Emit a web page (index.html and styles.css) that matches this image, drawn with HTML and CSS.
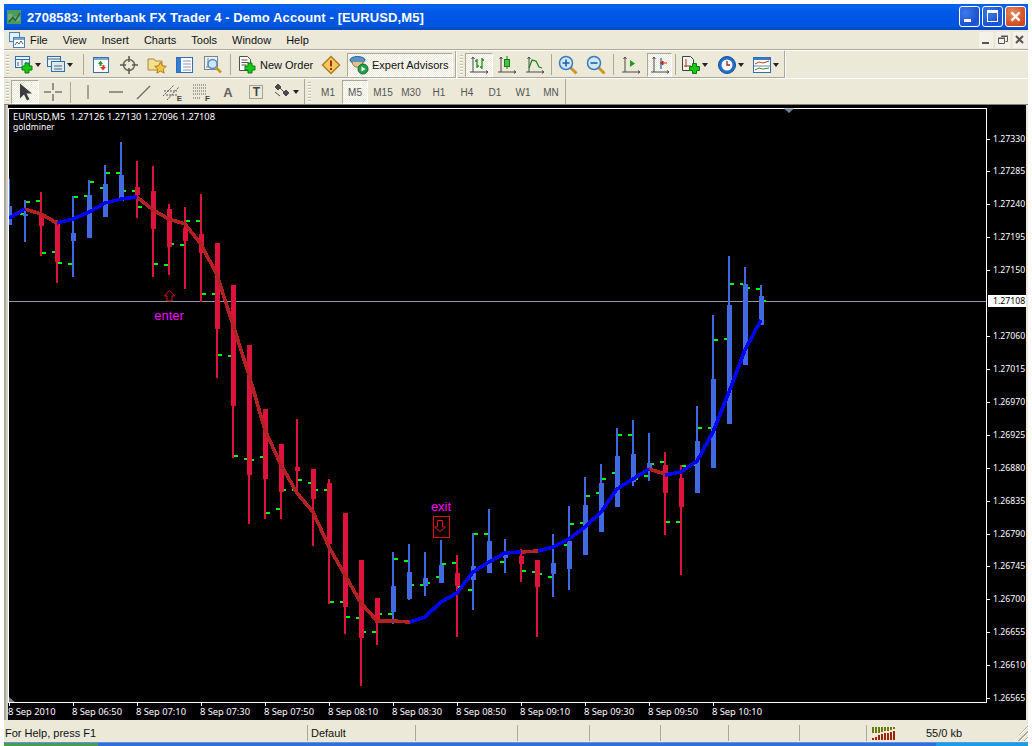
FILE: index.html
```html
<!DOCTYPE html>
<html lang="en">
<head>
<meta charset="utf-8">
<title>2708583: Interbank FX Trader 4 - Demo Account - [EURUSD,M5]</title>
<link rel="stylesheet" href="styles.css">
</head>
<body>
<svg class="defs" width="0" height="0">
  <defs>
    <g id="plus"><path d="M5 2h4v3h3v4H9v3H5V9H2V5h3z" fill="#18C818" stroke="#0A7A0A" stroke-width="1"/></g>
    <g id="axes" fill="none" stroke="#4A4A4A"><path d="M4 2v15M1 17h18M2.500 4L4 2l1.500 2M17 15.500l2 1.500-2 1.500"/></g>
    <symbol id="i-new" viewBox="0 0 20 20"><rect x="1.500" y="1.500" width="14" height="11" fill="#E8F2FC" stroke="#2F6DB5"/><path d="M1 4.500h15" stroke="#2F6DB5"/><path d="M4 7v4M8 5v5M12 7v4" stroke="#50606C"/><use href="#plus" x="6" y="6"/></symbol>
    <symbol id="i-prof" viewBox="0 0 20 20"><rect x="1.500" y="1.500" width="13" height="10" fill="#E8F2FC" stroke="#2F6DB5"/><rect x="5.500" y="6.500" width="13" height="10" fill="#DCEAF8" stroke="#2F6DB5"/><path d="M2 4h12M8 11h8M8 14h8" stroke="#50606C"/></symbol>
    <symbol id="i-mw" viewBox="0 0 20 20"><rect x="2.500" y="2.500" width="15" height="15" fill="#fff" stroke="#3A6EA5"/><path d="M3 3h14v2H3z" fill="#7DA7D8"/><path d="M7 9l2.500-3.500L12 9h-1.500v2h-2V9z" fill="#1B9E1B"/><path d="M9 12h2.500v-2h2v2H15l-3 3.500z" fill="#D83A1E"/></symbol>
    <symbol id="i-nav" viewBox="0 0 20 20"><circle cx="10" cy="10" r="5.500" fill="none" stroke="#6A6A60" stroke-width="1.500"/><path d="M10 1v6M10 13v6M1 10h6M13 10h6" stroke="#5A5A50" stroke-width="1.500"/></symbol>
    <symbol id="i-fav" viewBox="0 0 20 20"><path d="M1 4h6l1.500 2H15v9H1z" fill="#F4DE90" stroke="#A8883C"/><path d="M13.500 7l1.800 3.800 4 .5-3 2.800.8 4-3.600-2-3.600 2 .8-4-3-2.800 4-.5z" fill="#F5C53C" stroke="#B07A18"/></symbol>
    <symbol id="i-term" viewBox="0 0 20 20"><rect x="1.500" y="2.500" width="16" height="15" fill="#fff" stroke="#2F6DB5"/><rect x="2" y="3" width="4" height="14" fill="#2F7FD8"/><path d="M8 6h8M8 9h8M8 12h8M8 15h8" stroke="#8098B8"/></symbol>
    <symbol id="i-test" viewBox="0 0 20 20"><rect x="1.500" y="1.500" width="13" height="13" fill="#EEF2F6" stroke="#7A8490"/><path d="M5 3v9M3 12h9" stroke="#7A8490"/><circle cx="9.500" cy="9" r="4.500" fill="#CFE4F6" stroke="#5A8CBE" stroke-width="1.500"/><path d="M13 12.500l5 5" stroke="#C8982C" stroke-width="2.500"/></symbol>
    <symbol id="i-order" viewBox="0 0 20 20"><path d="M2.500 1.500h8l3 3v11h-11z" fill="#fff" stroke="#50504C"/><path d="M4.500 5h6M4.500 7.500h7M4.500 10h5" stroke="#50504C"/><use href="#plus" x="6" y="6"/></symbol>
    <symbol id="i-alert" viewBox="0 0 20 20"><path d="M10 1.500l8.500 8.500-8.500 8.500L1.500 10z" fill="#F6C860" stroke="#B07C20" stroke-width="1.500"/><path d="M9 5.500h2v6H9z" fill="#B02818"/><path d="M9 13h2v2H9z" fill="#B02818"/></symbol>
    <symbol id="i-ea" viewBox="0 0 20 20"><ellipse cx="8.500" cy="5" rx="7.500" ry="3.500" fill="#5B93C8" stroke="#2F5F90"/><path d="M3 7c1 7 10 7 11 0" fill="#E8C088" stroke="#9A7A50"/><circle cx="14" cy="14" r="5" fill="#22A04A" stroke="#0E6A2C"/><path d="M12.500 11.500l4 2.500-4 2.500z" fill="#fff"/></symbol>
    <symbol id="i-bar" viewBox="0 0 20 20"><use href="#axes"/><path d="M8 4v9M6 6h2M8 11h2M13 3v11M11 12h2M13 5h2" stroke="#1F8A1F" fill="none" stroke-width="1.300"/></symbol>
    <symbol id="i-candle" viewBox="0 0 20 20"><use href="#axes"/><path d="M10 1v13" stroke="#1F7A1F"/><rect x="7.500" y="4.500" width="5" height="7" fill="#3CC83C" stroke="#1F7A1F"/></symbol>
    <symbol id="i-line" viewBox="0 0 20 20"><use href="#axes"/><path d="M4 13l3-8 4 1 3 6 3 1" fill="none" stroke="#1F8A1F" stroke-width="1.300"/></symbol>
    <symbol id="i-zin" viewBox="0 0 20 20"><path d="M12 12l6.500 6.500" stroke="#C8982C" stroke-width="3"/><circle cx="8" cy="8" r="6.500" fill="#CFE6FA" stroke="#3C7CBA" stroke-width="1.500"/><path d="M4.500 8h7M8 4.500v7" stroke="#1E5FA8" stroke-width="1.600"/></symbol>
    <symbol id="i-zout" viewBox="0 0 20 20"><path d="M12 12l6.500 6.500" stroke="#C8982C" stroke-width="3"/><circle cx="8" cy="8" r="6.500" fill="#CFE6FA" stroke="#3C7CBA" stroke-width="1.500"/><path d="M4.500 8h7" stroke="#1E5FA8" stroke-width="1.600"/></symbol>
    <symbol id="i-shift" viewBox="0 0 20 20"><use href="#axes"/><path d="M9 5v7l5-3.500z" fill="#1F9A1F"/></symbol>
    <symbol id="i-auto" viewBox="0 0 20 20"><use href="#axes"/><path d="M11 3v11" stroke="#2F6DB5" stroke-width="1.300"/><path d="M17 8h-4M13 6l-2.500 2 2.500 2z" fill="#C02818" stroke="#C02818"/></symbol>
    <symbol id="i-add" viewBox="0 0 20 20"><path d="M1.500 1.500h8l3 3v11h-11z" fill="#F4F2EC" stroke="#404040"/><path d="M5 4v8M3 11h7" stroke="#A04020"/><use href="#plus" x="6.500" y="6.500"/></symbol>
    <symbol id="i-clock" viewBox="0 0 20 20"><circle cx="10" cy="10" r="8.500" fill="#1F6FC8" stroke="#154F98"/><circle cx="10" cy="10" r="5.500" fill="#F4F8FC"/><path d="M10 6v4h3" fill="none" stroke="#A02818" stroke-width="1.300"/></symbol>
    <symbol id="i-tmpl" viewBox="0 0 20 20"><rect x="1.500" y="2.500" width="17" height="15" fill="#fff" stroke="#2F6DB5"/><path d="M2 3h16v2H2z" fill="#3C7CC8"/><path d="M3 9l4-2 4 1 6-2" fill="none" stroke="#C04018"/><path d="M2 11h16" stroke="#7A8490"/><path d="M3 15l4-2 4 1 6-1" fill="none" stroke="#3A8A3A"/></symbol>
    <symbol id="i-arrow" viewBox="0 0 20 20"><path d="M5 1.500v15l4-4 3 6 2.500-1.200-3-5.800H17z" fill="#3E3E3E"/></symbol>
    <symbol id="i-cross" viewBox="0 0 20 20"><path d="M10 1v7M10 12v7M1 10h7M12 10h7" stroke="#3E3E3E"/></symbol>
    <symbol id="i-vl" viewBox="0 0 20 20"><path d="M10 3v14" stroke="#5A5A5A"/></symbol>
    <symbol id="i-hl" viewBox="0 0 20 20"><path d="M3 10h14" stroke="#5A5A5A" stroke-width="1.200"/></symbol>
    <symbol id="i-tl" viewBox="0 0 20 20"><path d="M3 17L16 4" stroke="#6A6A6A" stroke-width="1.200"/></symbol>
    <symbol id="i-chan" viewBox="0 0 20 20"><path d="M1 14L12 3M5 18L17 5M2 9h13M4 13h11" stroke="#5A5A5A" stroke-dasharray="2 1" fill="none"/></symbol>
    <symbol id="i-fibo" viewBox="0 0 20 20"><path d="M3 3h14M3 6h14M3 9h14M3 12h14M3 16h8" stroke="#5A5A5A" stroke-dasharray="1 1"/></symbol>
    <symbol id="i-tbox" viewBox="0 0 20 20"><rect x="3.500" y="3.500" width="13" height="13" fill="none" stroke="#5A5A5A" stroke-dasharray="1 1"/></symbol>
    <symbol id="i-shapes" viewBox="0 0 20 20"><path d="M6 2l3 3-3 3-3-3zM14 8l3 3-3 3-3-3zM3 10l5 4M8 6l4 4" fill="#4A4A4A" stroke="#4A4A4A"/></symbol>
    <symbol id="i-app" viewBox="0 0 16 16"><rect width="15" height="15" fill="#4C9A5C"/><path d="M1 4h5v6H1zM8 7h6v5H8z" fill="#6FB07A"/><path d="M2 13l4-5 3 3 5-8" fill="none" stroke="#2C5F3A" stroke-width="1.500"/></symbol>
    <symbol id="i-doc" viewBox="0 0 16 16"><rect x=".5" y=".5" width="10" height="9" fill="#E6F0FA" stroke="#4A80B8"/><rect x="4.500" y="5.500" width="11" height="10" fill="#fff" stroke="#4A80B8"/><path d="M5 6h10v2H5z" fill="#7DA7D8"/><path d="M6 13l2-3 2 2 2-3 2 3" fill="none" stroke="#50606C"/></symbol>
  </defs>
</svg>

<div class="window">
  <header class="titlebar">
    <svg class="app-icon"><use href="#i-app"/></svg>
    <span class="title-text">2708583: Interbank FX Trader 4 - Demo Account - [EURUSD,M5]</span>
    <div class="caption-btns">
      <span class="cap cap-min"><i></i></span>
      <span class="cap cap-max"><i></i></span>
      <span class="cap cap-close">
        <svg viewBox="0 0 21 21"><path d="M6 6l9 9M15 6l-9 9" stroke="#fff" stroke-width="2.600"/></svg>
      </span>
    </div>
  </header>

  <nav class="menubar">
    <svg class="menu-icon"><use href="#i-doc"/></svg>
    <span class="menu-item">File</span>
    <span class="menu-item">View</span>
    <span class="menu-item">Insert</span>
    <span class="menu-item">Charts</span>
    <span class="menu-item">Tools</span>
    <span class="menu-item">Window</span>
    <span class="menu-item">Help</span>
    <div class="mdi-btns">
      <span class="mdi"><svg viewBox="0 0 14 14"><path d="M3 10h7" stroke="#555" stroke-width="2"/></svg></span>
      <span class="mdi"><svg viewBox="0 0 14 14"><path d="M5.500 3.500h6v5h-2M2.500 5.500h6v5h-6z" fill="none" stroke="#555"/><path d="M5 3h7M2 5h7" stroke="#555"/></svg></span>
      <span class="mdi"><svg viewBox="0 0 14 14"><path d="M3 3l7 7M10 3l-7 7" stroke="#555" stroke-width="2"/></svg></span>
    </div>
  </nav>

  <div class="toolrow toolrow-top">
    <div class="toolbar tb-main">
      <span class="grip"></span>
      <span class="btn btn-drop"><svg class="ico"><use href="#i-new"/></svg><b class="caret"></b></span>
      <span class="btn btn-drop"><svg class="ico"><use href="#i-prof"/></svg><b class="caret"></b></span>
      <span class="sep sep-wide"></span>
      <span class="btn"><svg class="ico"><use href="#i-mw"/></svg></span>
      <span class="btn"><svg class="ico"><use href="#i-nav"/></svg></span>
      <span class="btn"><svg class="ico"><use href="#i-fav"/></svg></span>
      <span class="btn"><svg class="ico"><use href="#i-term"/></svg></span>
      <span class="btn"><svg class="ico"><use href="#i-test"/></svg></span>
      <span class="sep"></span>
      <span class="btn btn-text btn-order"><svg class="ico"><use href="#i-order"/></svg>New Order</span>
      <span class="btn"><svg class="ico"><use href="#i-alert"/></svg></span>
      <span class="btn btn-text btn-ea on"><svg class="ico"><use href="#i-ea"/></svg>Expert Advisors</span>
    </div>
    <div class="toolbar tb-charts">
      <span class="grip"></span>
      <span class="btn on"><svg class="ico"><use href="#i-bar"/></svg></span>
      <span class="btn"><svg class="ico"><use href="#i-candle"/></svg></span>
      <span class="btn"><svg class="ico"><use href="#i-line"/></svg></span>
      <span class="sep sep-tight"></span>
      <span class="btn"><svg class="ico"><use href="#i-zin"/></svg></span>
      <span class="btn"><svg class="ico"><use href="#i-zout"/></svg></span>
      <span class="sep"></span>
      <span class="btn"><svg class="ico"><use href="#i-shift"/></svg></span>
      <span class="btn btn-narrow on"><svg class="ico"><use href="#i-auto"/></svg></span>
      <span class="sep"></span>
      <span class="btn btn-drop"><svg class="ico"><use href="#i-add"/></svg><b class="caret"></b></span>
      <span class="btn btn-drop btn-clock"><svg class="ico"><use href="#i-clock"/></svg><b class="caret"></b></span>
      <span class="btn btn-drop btn-tmpl"><svg class="ico"><use href="#i-tmpl"/></svg><b class="caret"></b></span>
    </div>
  </div>

  <div class="toolrow toolrow-bottom">
    <div class="toolbar tb-draw">
      <span class="grip"></span>
      <span class="btn on"><svg class="ico"><use href="#i-arrow"/></svg></span>
      <span class="btn"><svg class="ico"><use href="#i-cross"/></svg></span>
      <span class="sep"></span>
      <span class="btn"><svg class="ico"><use href="#i-vl"/></svg></span>
      <span class="btn"><svg class="ico"><use href="#i-hl"/></svg></span>
      <span class="btn"><svg class="ico"><use href="#i-tl"/></svg></span>
      <span class="btn btn-badge"><svg class="ico"><use href="#i-chan"/></svg><em>E</em></span>
      <span class="btn btn-badge"><svg class="ico"><use href="#i-fibo"/></svg><em>F</em></span>
      <span class="btn btn-a">A</span>
      <span class="btn btn-t"><svg class="ico"><use href="#i-tbox"/></svg><em>T</em></span>
      <span class="btn btn-drop"><svg class="ico"><use href="#i-shapes"/></svg><b class="caret"></b></span>
    </div>
    <div class="toolbar tb-period">
      <span class="grip"></span>
      <span class="per">M1</span>
      <span class="per on">M5</span>
      <span class="per">M15</span>
      <span class="per">M30</span>
      <span class="per">H1</span>
      <span class="per">H4</span>
      <span class="per">D1</span>
      <span class="per">W1</span>
      <span class="per">MN</span>
    </div>
  </div>

  <main class="chart-wrap">
    <svg class="chart" viewBox="8 105 1018 615">
      <path class="price-line" d="M9 301.500H986"/>
      <path class="ticks" d="M26 202h4M36 201h4M20 214h4M42 253h4M52 252h3M58 263h4M68 264h4M74 197h4M84 196h3M90 182h4M100 188h3M106 173h4M116 173h4M122 191h4M132 191h3M138 207h4M148 208h3M154 264h4M164 265h4M170 244h4M180 245h4M186 221h4M196 221h4M202 294h4M212 294h4M218 355h4M228 356h3M234 456h4M244 459h4M250 460h4M260 457h3M266 513h4M276 509h4M283 490h3M292 490h4M298 480h4M308 483h4M315 490h3M324 490h4M330 602h4M340 602h3M346 617h4M356 618h3M363 632h3M372 632h4M380 614h2M388 614h4M394 559h4M404 561h4M412 585h2M420 585h4M427 583h3M436 577h3M442 564h4M452 563h4M458 587h2M468 590h4M474 534h4M484 534h4M500 562h4M518 553h2M522 571h4M532 572h3M539 574h3M548 577h4M564 545h3M570 524h4M580 523h3M586 496h4M596 493h3M602 479h4M612 473h3M618 435h4M628 435h4M634 479h4M644 476h4M651 464h3M660 462h4M666 522h4M676 522h4M682 466h4M694 465h3M698 428h4M708 428h3M714 340h4M724 339h3M730 284h4M740 284h3M748 288h2M756 289h4M763 301h3"/>
      <path class="wick red" d="M41 192V256M57 220V283M137 161V218M153 166V277M169 204V275M185 207V289M201 194V302M217 243V378M233 285V458M249 345V524M265 409V519M281 444V519M297 419V492M313 469V546M329 479V604M345 513V634M361 560V686M377 598V645M457 555V637M521 549V582M537 560V637M665 452V535M681 465V575"/>
      <path class="body red" d="M41.500 213V226M57.500 222V262M137.500 187V195M153.500 191V229M169.500 209V247M185.500 228V241M201.500 234V253M217.500 243V329M233.500 285V406M249.500 345V475M265.500 409V479M281.500 444V492M297.500 467V471M313.500 469V499M329.500 483V544M345.500 513V607M361.500 560V638M377.500 598V623M457.500 573V586M521.500 556V564M537.500 560V587M665.500 465V493M681.500 478V507"/>
      <path class="wick blue" d="M9 179V225M25 200V242M73 196V277M89 180V238M105 165V217M121 142V201M393 552V624M409 544V600M425 552V596M441 540V583M473 533V610M489 509V573M505 539V573M553 534V597M569 506V590M585 477V555M601 464V532M617 428V507M633 420V486M649 433V481M697 406V493M713 315V468M729 256V424M745 267V365M761 285V325"/>
      <path class="body blue" d="M9.500 206V225M25.500 214V216M73.500 233V241M89.500 195V238M105.500 184V217M121.500 175V201M393.500 586V612M409.500 572V599M425.500 578V586M441.500 565V583M473.500 566V580M489.500 541V573M505.500 555V558M553.500 563V574M569.500 541V569M585.500 505V555M601.500 483V532M617.500 456V507M633.500 454V482M649.500 463V470M697.500 441V493M713.500 379V468M729.500 305V424M745.500 284V365M761.500 296V325"/>
      <polyline class="ma ma-red" points="25,209 41,214 57,223"/>
      <polyline class="ma ma-red" points="137,197 153,210 169,219 185,224 201,244 217,275 233,325 249,375 265,430 280,463 297,493 313,512 329,547 345,575 361,603 377,621 393,621 410,622"/>
      <polyline class="ma ma-red" points="521,552 538,551"/>
      <polyline class="ma ma-red" points="649,469 665,474"/>
      <polyline class="ma ma-blue" points="9,218 25,209"/>
      <polyline class="ma ma-blue" points="57,223 73,219 89,212 105,203 121,199 137,197"/>
      <polyline class="ma ma-blue" points="410,622 425,617 441,602 457,593 473,572 489,562 505,553 521,552"/>
      <polyline class="ma ma-blue" points="538,551 553,547 569,539 585,527 601,512 617,489 633,479 649,469"/>
      <polyline class="ma ma-blue" points="665,475 681,472 697,461 713,432 729,392 745,350 761,320"/>
      <path class="frame" d="M8.500 108.500H986.500V702.500H8.500Z"/>
      <path class="frame" d="M73 703v3M137 703v3M201 703v3M265 703v3M329 703v3M393 703v3M457 703v3M521 703v3M585 703v3M649 703v3M713 703v3M9 703v3M987 139h3M987 171h3M987 204h3M987 237h3M987 270h3M987 336h3M987 369h3M987 402h3M987 435h3M987 468h3M987 501h3M987 534h3M987 566h3M987 599h3M987 632h3M987 665h3M987 698h3"/>
      <path class="marker" d="M789 113l-5-4.500h10zM9 697v5h6z"/>
      <path class="arrow-up" d="M169.500 290.500l5 5.500h-2.500v5h-5v-5h-2.500z"/>
      <path class="arrow-box" d="M433.500 516.500h16v21h-16z"/>
      <path class="arrow-up" d="M437.500 520.500h5v6.500h3l-5.500 4.500-5.500-4.500h3z"/>
      <text class="lbl-m" x="169" y="320" text-anchor="middle">enter</text>
      <text class="lbl-m" x="441" y="511" text-anchor="middle">exit</text>
      <text class="txt" x="13" y="119.500" xml:space="preserve">EURUSD,M5  1.27126 1.27130 1.27096 1.27108</text>
      <text class="txt txt-small" x="13" y="130">goldminer</text>
      <g class="txt yaxis">
        <text x="993" y="142">1.27330</text><text x="993" y="174">1.27285</text><text x="993" y="207">1.27240</text><text x="993" y="240">1.27195</text><text x="993" y="273">1.27150</text><text x="993" y="339">1.27060</text><text x="993" y="372">1.27015</text><text x="993" y="405">1.26970</text><text x="993" y="438">1.26925</text><text x="993" y="471">1.26880</text><text x="993" y="504">1.26835</text><text x="993" y="537">1.26790</text><text x="993" y="569">1.26745</text><text x="993" y="602">1.26700</text><text x="993" y="635">1.26655</text><text x="993" y="668">1.26610</text><text x="993" y="701">1.26565</text>
      </g>
      <g class="txt">
        <text x="8" y="715">8 Sep 2010</text><text x="72" y="715">8 Sep 06:50</text><text x="136" y="715">8 Sep 07:10</text><text x="200" y="715">8 Sep 07:30</text><text x="264" y="715">8 Sep 07:50</text><text x="328" y="715">8 Sep 08:10</text><text x="392" y="715">8 Sep 08:30</text><text x="456" y="715">8 Sep 08:50</text><text x="520" y="715">8 Sep 09:10</text><text x="584" y="715">8 Sep 09:30</text><text x="648" y="715">8 Sep 09:50</text><text x="712" y="715">8 Sep 10:10</text>
      </g>
      <rect class="price-box" x="988" y="295" width="38" height="12"/>
      <text class="txt price-txt" x="993" y="304">1.27108</text>
    </svg>
  </main>

  <footer class="statusbar">
    <span class="cell">For Help, press F1</span>
    <span class="cell">Default</span>
    <span class="cell"></span>
    <span class="cell"></span>
    <span class="cell"></span>
    <span class="cell"></span>
    <span class="cell"></span>
    <span class="cell"></span>
    <span class="cell cell-conn">
      <svg class="conn" viewBox="0 0 24 13"><path d="M1 0v6M4 0v6M7 0v6M10 0v5M13 0v4M16 0v4M19 0v3M22 0v2" stroke="#6B7A00" stroke-width="2"/><path d="M1 11v2M4 10v3M7 8v5M10 7v6M13 6v7M16 6v7M19 5v8M22 4v9" stroke="#A02008" stroke-width="2"/></svg>
      <span class="traffic">55/0 kb</span>
      <span class="sizer"></span>
    </span>
  </footer>

  <div class="taskbar"><span class="start"></span><span class="tray"></span></div>
</div>
</body>
</html>
```
FILE: styles.css
```css
html, body { margin: 0; padding: 0; background: #fff; overflow: hidden; }
body { width: 1032px; height: 746px; }
.defs { position: absolute; }
.window {
  margin: 4px 4px 0;
  width: 1024px;
  height: 742px;
  display: flex;
  flex-direction: column;
  background: #ECE9D8;
  font: 11px "Liberation Sans", sans-serif;
  color: #111;
  overflow: hidden;
}
.titlebar {
  height: 26px;
  flex: none;
  display: flex;
  align-items: center;
  padding: 0 2px 0 3px;
  background: linear-gradient(#0A5FE8 0, #0A62F0 8%, #0058E6 35%, #0055E0 85%, #0046B8 100%);
}
.app-icon { width: 15px; height: 15px; margin-right: 5px; }
.title-text {
  font: bold 13px "Liberation Sans", sans-serif;
  color: #fff;
  letter-spacing: .1px;
  white-space: nowrap;
}
.caption-btns { margin-left: auto; display: flex; gap: 2px; margin-top: -2px; }
.cap {
  position: relative;
  width: 19px;
  height: 19px;
  border: 1px solid #fff;
  border-radius: 3px;
  display: block;
  background: radial-gradient(circle at 30% 30%, #3C7CE8, #1C50D0 70%, #2A60D8);
}
.cap-close { background: radial-gradient(circle at 35% 30%, #E88A60, #D0481C 75%, #C84018); }
.cap svg { width: 19px; height: 19px; display: block; }
.cap-min i { display: block; width: 7px; height: 3px; background: #fff; margin: 12px 0 0 4px; }
.cap-max i { display: block; width: 9px; height: 8px; border: 1px solid #fff; border-top-width: 3px; margin: 3px 0 0 4px; }
.menubar {
  height: 20px;
  flex: none;
  box-sizing: border-box;
  display: flex;
  align-items: center;
  padding-left: 5px;
  border-bottom: 1px solid #ACA899;
}
.menu-icon { width: 16px; height: 16px; margin-right: -2.500px; }
.menu-item { padding: 0 7.500px; }
.mdi-btns { margin-left: auto; display: flex; gap: 3px; padding-right: 1px; }
.mdi { width: 14px; height: 16px; background: #F4F2E8; display: block; }
.mdi svg { width: 14px; height: 14px; display: block; margin-top: 1px; }
.toolrow { display: flex; flex: none; border-top: 1px solid #fff; }
.toolrow-top { height: 27px; }
.toolrow-bottom { height: 25px; }
.toolbar {
  display: flex;
  align-items: center;
  height: 100%;
  box-sizing: border-box;
  border-right: 1px solid #ACA899;
  border-bottom: 1px solid #ACA899;
  box-shadow: 1px 1px 0 #fff;
  padding: 1px 0 0 1px;
}
.tb-main { width: 452px; margin-right: 2px; }
.tb-charts { width: 327px; }
.tb-draw { width: 301px; margin-right: 1px; }
.tb-period { width: 260px; }
.toolrow-bottom .toolbar { border-bottom: 0; box-shadow: none; }
.grip {
  width: 3px;
  height: 20px;
  margin: 0 3px 0 1px;
  flex: none;
  background: repeating-linear-gradient(#C4C1B0 0 1px, #fff 1px 2px, transparent 2px 3px);
}
.tb-charts .grip, .tb-draw .grip { margin-right: 2px; }
.btn {
  width: 28px;
  height: 24px;
  flex: none;
  box-sizing: border-box;
  display: flex;
  align-items: center;
  justify-content: center;
  position: relative;
}
.ico { width: 20px; height: 20px; display: block; flex: none; }
.btn-drop { width: 32px; padding-right: 8px; }
.btn-clock { margin-left: 4px; }
.btn-tmpl { margin-left: 3px; }
.caret { position: absolute; right: 3px; top: 10px; width: 0; height: 0; border: 3px solid transparent; border-top: 4px solid #222; border-bottom: 0; }
.sep { width: 1px; height: 21px; margin: 0 3px; flex: none; background: #ACA899; }
.sep-wide { margin-left: 7px; }
.sep-tight { margin: 0 2px; }
.btn-text { justify-content: flex-start; gap: 3px; padding-left: 3px; white-space: nowrap; }
.btn-order { width: 83px; }
.btn-ea { width: 106px; margin-left: 2px; padding-left: 1px; }
.btn-narrow { width: 25px; margin-left: 2px; }
.on {
  border: 1px solid;
  border-color: #ACA899 #fff #fff #ACA899;
  background: conic-gradient(#fff 25%, #ECE9D8 0 50%, #fff 0 75%, #ECE9D8 0) 0 0 / 2px 2px;
}
.btn em {
  position: absolute;
  font: bold 8px "Liberation Sans", sans-serif;
  color: #444;
  right: 4px;
  bottom: 1px;
}
.btn-t em { font-size: 12px; right: 10px; bottom: 5px; }
.btn-a { font: bold 13px "Liberation Sans", sans-serif; color: #606060; }
.per {
  width: 28px;
  height: 24px;
  box-sizing: border-box;
  flex: none;
  display: flex;
  align-items: center;
  justify-content: center;
  font: 10px "Liberation Sans", sans-serif;
  color: #555;
}
.tb-period .per:first-of-type { width: 25px; }
.per.on { width: 26px; margin-right: 1px; }
.chart-wrap {
  height: 616px;
  flex: none;
  box-sizing: border-box;
  border-top: 1px solid #808080;
  padding-left: 4px;
  background: linear-gradient(90deg, #ACA899 0 2px, #D4D0C8 2px 4px, transparent 4px);
}
.chart { display: block; width: 1018px; height: 615px; background: #000; }
.price-line { stroke: #8899AA; stroke-width: 1; fill: none; shape-rendering: crispEdges; }
.ticks { stroke: #00FF00; stroke-width: 2; fill: none; shape-rendering: crispEdges; }
.wick { stroke-width: 2; fill: none; shape-rendering: crispEdges; }
.body { stroke-width: 5; fill: none; shape-rendering: crispEdges; }
.red { stroke: #DC143C; }
.blue { stroke: #4169E1; }
.ma { fill: none; stroke-width: 3.600; shape-rendering: crispEdges; stroke-linejoin: round; }
.ma-red { stroke: #B22222; }
.ma-blue { stroke: #0000FF; }
.frame { fill: none; stroke: #fff; stroke-width: 1; shape-rendering: crispEdges; }
.marker { fill: #708090; }
.arrow-up { fill: none; stroke: #E01010; stroke-width: 1; }
.arrow-box { fill: none; stroke: #E01010; stroke-width: 1; shape-rendering: crispEdges; }
.lbl-m { font: 13px "Liberation Sans", sans-serif; fill: #FF00FF; }
.txt, .txt text { font: 9.300px "Noto Sans", sans-serif; fill: #fff; }
.yaxis text { font-size: 8.700px; }
.txt-small { font-size: 8.500px; }
.price-box { fill: #fff; }
.price-txt { fill: #000; font-size: 8.700px; }
.statusbar {
  height: 22px;
  flex: none;
  display: grid;
  grid-template-columns: 304px 108px 102px 72px 71px 68px 71px 67px 1fr;
  align-items: end;
  padding-bottom: 1px;
  box-sizing: border-box;
}
.cell {
  height: 16px;
  line-height: 16px;
  padding-left: 3px;
  box-sizing: border-box;
  border-right: 1px solid #ACA899;
  white-space: nowrap;
}
.cell:first-child { padding-left: 1px; }
.cell-conn { border-right: 0; display: flex; align-items: center; position: relative; padding-left: 5px; }
.conn { width: 24px; height: 13px; flex: none; }
.traffic { margin-left: 30px; }
.sizer {
  position: absolute;
  right: 0;
  top: 0;
  width: 14px;
  height: 16px;
  background: repeating-linear-gradient(135deg, transparent 0 2px, #ACA899 2px 3px, #fff 3px 4px);
  clip-path: polygon(100% 0, 100% 100%, 0 100%);
}
.taskbar {
  height: 4px;
  flex: none;
  display: flex;
  background: #2E6FD8;
  border-top: 1px solid #5A94E8;
  box-sizing: border-box;
}
.start { width: 94px; background: #4C9A4C; }
.tray { width: 92px; margin-left: auto; background: #12A0E8; }
```
